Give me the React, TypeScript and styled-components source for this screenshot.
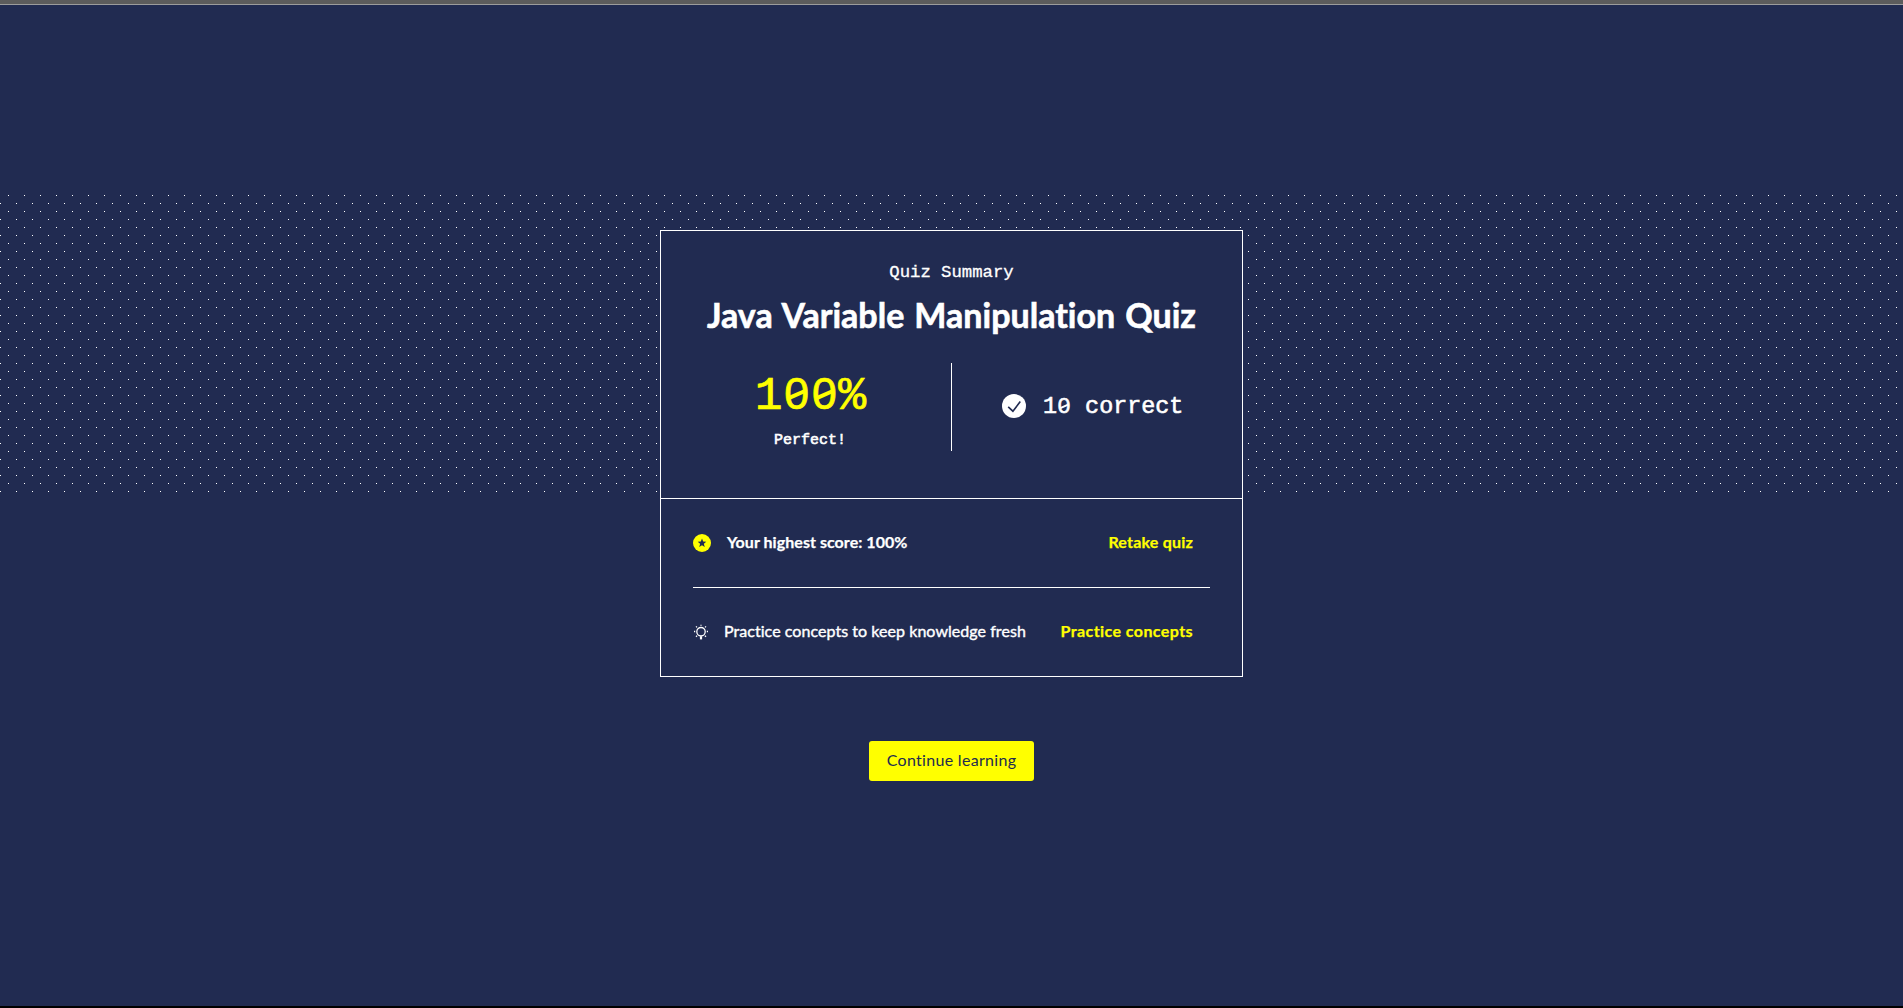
import React from 'react';
import styled, { createGlobalStyle } from 'styled-components';

const navy = '#212b51';
const yellow = '#ffff00';
const sans = 'Lato, "Open Sans", sans-serif';
const mono = '"Liberation Mono", "DejaVu Sans Mono", monospace';

const GlobalStyle = createGlobalStyle`
  * { box-sizing: border-box; }
  body { margin: 0; background: ${navy}; }
`;

const Page = styled.div`
  height: 1008px;
  overflow: hidden;
  display: flex;
  flex-direction: column;
  background: ${navy};
  color: #fff;
  font-family: ${sans};
  border-bottom: 2px solid #000;
`;

const TopBar = styled.header`
  flex: none;
  height: 5px;
  background: #5c5c5c;
  border-bottom: 1px solid #9c9c9c;
`;

const Stage = styled.main`
  display: grid;
  grid-template-columns: 1fr;
  padding-top: 190px;
`;

const DotBand = styled.div`
  grid-area: 1 / 1;
  height: 300px;
  background-image:
    conic-gradient(from 270deg at 1px 1px, #fff 90deg, transparent 0),
    conic-gradient(from 270deg at 1px 1px, #fff 90deg, transparent 0);
  background-size: 16px 16px;
  background-position: 8px 0, 0 8px;
`;

const Content = styled.div`
  grid-area: 1 / 1;
  display: flex;
  flex-direction: column;
  align-items: center;
  padding-top: 35px;
`;

const Card = styled.section`
  width: 583px;
  height: 447px;
  background: ${navy};
  border: 1px solid #fff;
`;

const Summary = styled.div`
  height: 267px;
  padding-top: 31px;
  display: flex;
  flex-direction: column;
  align-items: center;
`;

const Eyebrow = styled.p`
  margin: 0;
  font: 400 17.3px/22px ${mono};
  -webkit-text-stroke: 0.3px currentColor;
`;

const Title = styled.h1`
  margin: 8px 0 0;
  font-size: 34px;
  font-weight: 700;
  line-height: 46px;
  letter-spacing: 0.01px;
  word-spacing: 1.8px;
  font-variant-ligatures: none;
  white-space: nowrap;
  -webkit-text-stroke: 0.6px currentColor;
`;

const Results = styled.div`
  width: 100%;
  height: 87px;
  margin-top: 25px;
  display: grid;
  grid-template-columns: 290px 291px;
`;

const Score = styled.div`
  display: flex;
  flex-direction: column;
  align-items: center;
  padding-left: 9px;
`;

const Percent = styled.div`
  display: flex;
  align-items: baseline;
  height: 62px;
  color: ${yellow};
  font: 400 46.4px/62px ${mono};
  -webkit-text-stroke: 0.7px currentColor;
`;

const Verdict = styled.div`
  font: 400 15px/20px ${mono};
  -webkit-text-stroke: 0.6px currentColor;
  margin-top: 6px;
  margin-right: 1px;
`;

const Correct = styled.div`
  display: flex;
  align-items: center;
  border-left: 1px solid #fff;
  padding: 0 0 2px 50px;
  gap: 17px;
  font: 400 23.4px/30px ${mono};
  -webkit-text-stroke: 0.6px currentColor;
`;

const CorrectLabel = styled.span`
  display: flex;
  align-items: baseline;
  white-space: pre;
`;

const ZeroGlyph = styled.span`
  position: relative;
  display: inline-flex;
  justify-content: center;
  width: 0.625em;
  font-family: "Liberation Sans", sans-serif;
  font-size: 0.96em;

  &::after {
    content: '';
    position: absolute;
    left: 0.12em;
    right: 0.12em;
    top: 50%;
    height: 0.085em;
    background: currentColor;
    transform: translateY(-35%) rotate(-24deg);
  }
`;

const Rows = styled.div`
  border-top: 1px solid #fff;
  padding: 0 32px;
`;

const Row = styled.div`
  display: flex;
  align-items: center;
  height: 88px;
  font-size: 16px;
  line-height: 24px;

  & + & {
    border-top: 1px solid #fff;
  }
`;

const IconSlot = styled.span<{ $width: number }>`
  flex: none;
  display: flex;
  width: ${(p) => p.$width}px;
`;

const RowLabel = styled.span<{ $bold?: boolean; $tracking: number }>`
  flex: 1;
  padding-bottom: 2px;
  white-space: nowrap;
  font-weight: ${(p) => (p.$bold ? 700 : 400)};
  letter-spacing: ${(p) => p.$tracking}px;
  -webkit-text-stroke: ${(p) => (p.$bold ? 0.25 : 0.4)}px currentColor;
`;

const RowLink = styled.a<{ $tracking: number }>`
  margin-right: 17px;
  padding-bottom: 2px;
  color: ${yellow};
  font-weight: 700;
  letter-spacing: ${(p) => p.$tracking}px;
  -webkit-text-stroke: 0.25px currentColor;
  cursor: pointer;
  white-space: nowrap;
`;

const ContinueButton = styled.button`
  margin-top: 64px;
  width: 165px;
  height: 40px;
  padding: 0 0 2px;
  border: 0;
  border-radius: 3px;
  background: ${yellow};
  color: ${navy};
  font: 400 16px/24px ${sans};
  letter-spacing: 0.3px;
`;

const Zero = () => <ZeroGlyph>0</ZeroGlyph>;

const CheckIcon = () => (
  <svg width="24" height="24" viewBox="0 0 24 24">
    <circle cx="12" cy="12" r="12" fill="#fff" />
    <path d="M6.2 12.9 L10.9 17.2 L18.3 7.6" fill="none" stroke={navy} strokeWidth="1.6" />
  </svg>
);

const StarIcon = () => (
  <svg width="18" height="18" viewBox="0 0 18 18">
    <circle cx="9" cy="9" r="9" fill={yellow} />
    <path
      d="M9 4.6 L10.2 7.6 L13.3 7.8 L10.9 9.8 L11.7 13 L9 11.2 L6.3 13 L7.1 9.8 L4.7 7.8 L7.8 7.6 Z"
      fill={navy}
    />
  </svg>
);

const BulbIcon = () => (
  <svg width="16" height="16" viewBox="0 0 16 16" fill="none" stroke="#fff">
    <circle cx="8" cy="7.7" r="4.2" strokeWidth="1.3" />
    <path d="M6.9 12.2 H9.1 V15.4 H6.9 Z" fill="#fff" stroke="none" />
    <path
      d="M8 0.7 V1.8 M1 7.5 H2.2 M13.8 7.5 H15 M3 2.4 L4 3.4 M13 2.4 L12 3.4 M3 12.8 L4 11.8 M13 12.8 L12 11.8"
      strokeWidth="1.3"
    />
  </svg>
);

export default function App() {
  return (
    <Page>
      <GlobalStyle />
      <TopBar />
      <Stage>
        <DotBand />
        <Content>
          <Card>
            <Summary>
              <Eyebrow>Quiz Summary</Eyebrow>
              <Title>Java Variable Manipulation Quiz</Title>
              <Results>
                <Score>
                  <Percent>
                    1<Zero />
                    <Zero />%
                  </Percent>
                  <Verdict>Perfect!</Verdict>
                </Score>
                <Correct>
                  <CheckIcon />
                  <CorrectLabel>
                    1<Zero /> correct
                  </CorrectLabel>
                </Correct>
              </Results>
            </Summary>
            <Rows>
              <Row>
                <IconSlot $width={34}>
                  <StarIcon />
                </IconSlot>
                <RowLabel $bold $tracking={0.05}>
                  Your highest score: 100%
                </RowLabel>
                <RowLink $tracking={0.2}>Retake quiz</RowLink>
              </Row>
              <Row>
                <IconSlot $width={31}>
                  <BulbIcon />
                </IconSlot>
                <RowLabel $tracking={0.05}>Practice concepts to keep knowledge fresh</RowLabel>
                <RowLink $tracking={0.42}>Practice concepts</RowLink>
              </Row>
            </Rows>
          </Card>
          <ContinueButton>Continue learning</ContinueButton>
        </Content>
      </Stage>
    </Page>
  );
}
